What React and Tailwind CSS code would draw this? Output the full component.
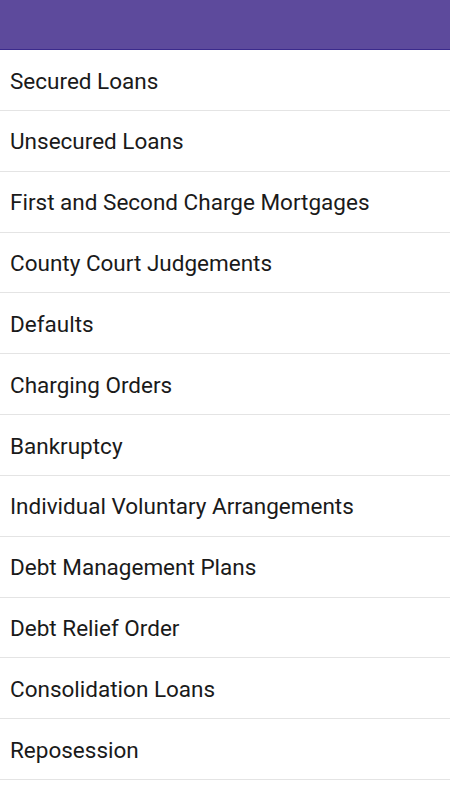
const items = [
  'Secured Loans',
  'Unsecured Loans',
  'First and Second Charge Mortgages',
  'County Court Judgements',
  'Defaults',
  'Charging Orders',
  'Bankruptcy',
  'Individual Voluntary Arrangements',
  'Debt Management Plans',
  'Debt Relief Order',
  'Consolidation Loans',
  'Reposession',
]

export default function App() {
  return (
    <div className="w-[450px] h-[800px] overflow-hidden bg-white" style={{ fontFamily: 'Roboto, "Noto Sans", sans-serif' }}>
      <div className="h-[50px] bg-[#5d4a9c] border-b border-[#3b2a8c]" />
      <ul>
        {items.map(label => (
          <li key={label} className="h-[60.85px] flex items-center px-[10px] pt-[3px] border-b border-[#e4e4e4] text-[22.5px] text-[#1a1a1a]">
            {label}
          </li>
        ))}
      </ul>
    </div>
  )
}
